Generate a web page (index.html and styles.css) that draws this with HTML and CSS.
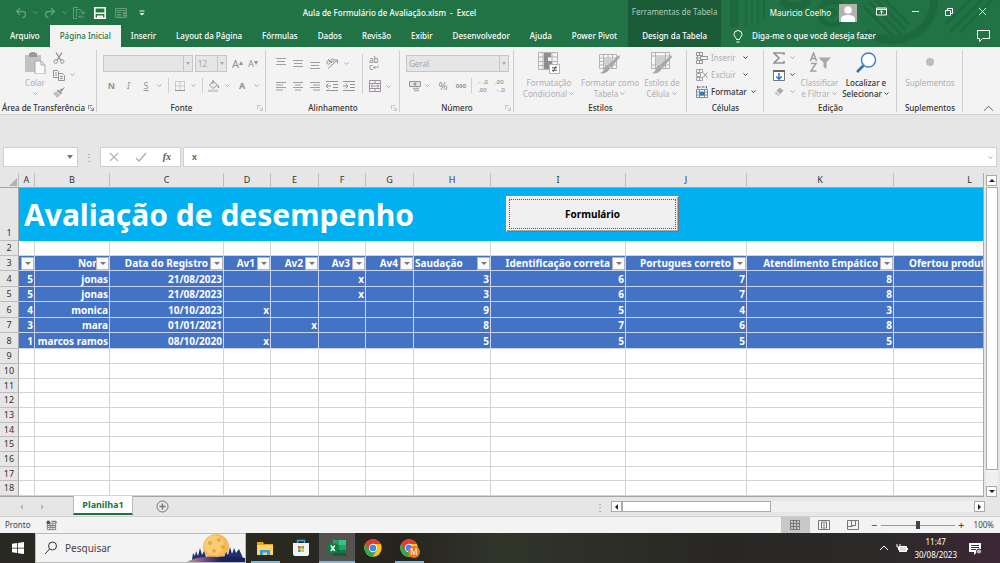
FILE: index.html
```
<!DOCTYPE html>
<html lang="pt-BR">
<head>
<meta charset="utf-8">
<title>Aula de Formulário de Avaliação.xlsm - Excel</title>
<link rel="stylesheet" href="styles.css">
</head>
<body>
<svg class="defs" aria-hidden="true">
  <symbol id="chev" viewBox="0 0 7 5"><path d="M1.500 1.500l2 2 2-2" fill="none" stroke="currentColor"/></symbol>
  <symbol id="launch" viewBox="0 0 7 7"><path d="M.5 5V.5H5M2.500 2.500L6 6M6.500 3v3.500H3" fill="none" stroke="currentColor"/></symbol>
  <symbol id="brush" viewBox="0 0 22 22"><path d="M21 5l-9 11-3-3L20 3z" fill="#a9a7a9"/><path d="M8 13c3 1 4 3 2 5-2 3-6 4-9 3 3-1 3-2 4-5 1-2 2-3 3-3z" fill="#a9a7a9"/></symbol>
</svg>

<header class="top">
  <svg class="pattern" viewBox="0 0 340 47" aria-hidden="true">
    <g fill="none" stroke="#1e683e">
      <path stroke-width="2" d="M86 0v26M92 0v24M98 0v25M104 0v20"/>
      <path stroke-width="9" d="M74 0v27"/>
      <circle cx="172" cy="13" r="12" stroke-width="6"/><circle cx="172" cy="13" r="3" stroke-width="4"/>
      <path stroke-width="8" d="M122 0a14 10 0 0 0 26 0M206 32c26 18 68 4 68-32"/>
      <path stroke-width="3" d="M203 6l30 30M209 2l32 32M216 0l30 30M225 0l24 24M290 32l32-32M300 32l32-32M286 24l24-24"/>
    </g>
  </svg>
  <div class="titlebar">
    <div class="quick">
      <button class="dim" aria-label="Desfazer"><svg viewBox="0 0 12 12"><path d="M5 1L1.500 4.500 5 8M2 4.500h5.500c4 0 4 5 0 6.500" fill="none" stroke="currentColor" stroke-width="1.300"/></svg></button>
      <svg class="chev dim"><use href="#chev"/></svg>
      <button class="dim" aria-label="Refazer"><svg viewBox="0 0 12 12"><path d="M7 1l3.500 3.500L7 8M10 4.500H4.500c-4 0-4 5 0 6.500" fill="none" stroke="currentColor" stroke-width="1.300"/></svg></button>
      <svg class="chev dim"><use href="#chev"/></svg>
      <button class="dim" aria-label="Atualizar"><svg viewBox="0 0 12 12"><path d="M4 11.500H.5V.5H5M3.500 2.500h4l2 2M3.500 2.500V10M6 6a3 3 0 0 1 5 1M11 9a3 3 0 0 1-5 0M11 4.500V7H9M6 11V9h2" fill="none" stroke="currentColor"/></svg></button>
      <button aria-label="Salvar"><svg viewBox="0 0 12 12"><path d="M.8.8h10.400v10.400H.8z" fill="none" stroke="#fff" stroke-width="1.600"/><path d="M1 5.500h10v1.500H1zM3 8.500h6V12H7V10H6v2H3z" fill="#fff"/></svg></button>
      <button class="dim" aria-label="Formulário de dados"><svg viewBox="0 0 12 12"><path d="M.5 1.500h11v9H.5zM.5 3.500h11M2 5.500h4M2 7.500h4M2 9h4M8 5.500h2.500v1H8zM8 8h2.500v1H8z" fill="none" stroke="currentColor"/></svg></button>
      <button aria-label="Personalizar"><svg viewBox="0 0 12 12"><path d="M3.500 4h5" stroke="#fff"/><path d="M3.500 6h5L6 8.500z" fill="#fff"/></svg></button>
    </div>
    <h1 class="doc">Aula de Formulário de Avaliação.xlsm&nbsp; -&nbsp; Excel</h1>
    <div class="account">
      <span>Mauricio Coelho</span>
      <svg class="avatar" viewBox="0 0 18 18"><path d="M0 0h18v18H0z" fill="#b5b1ae"/><circle cx="9" cy="6" r="3.800" fill="#fff"/><path d="M2 18v-3c0-3 3-4 7-4s7 1 7 4v3z" fill="#fff"/></svg>
    </div>
    <div class="window">
      <button aria-label="Opções da faixa"><svg viewBox="0 0 11 11"><path d="M.5 2h10v7H.5zM.5 3.500h10M5.500 8V4.800M3.800 6.500L5.500 4.800l1.700 1.700" fill="none" stroke="#fff"/></svg></button>
      <button aria-label="Minimizar"><svg viewBox="0 0 11 11"><path d="M2 5.500h7" stroke="#fff"/></svg></button>
      <button aria-label="Restaurar"><svg viewBox="0 0 11 11"><path d="M2.500 4.500h5v5h-5zM4.500 4V2.500h5v5H8" fill="none" stroke="#fff"/></svg></button>
      <button aria-label="Fechar"><svg viewBox="0 0 11 11"><path d="M2 2l7 7M9 2L2 9" stroke="#fff"/></svg></button>
    </div>
  </div>
  <nav class="tabs">
    <button>Arquivo</button><button class="on">Página Inicial</button><button>Inserir</button><button>Layout da Página</button><button>Fórmulas</button><button>Dados</button><button>Revisão</button><button>Exibir</button><button>Desenvolvedor</button><button>Ajuda</button><button>Power Pivot</button>
    <div class="context"><span>Ferramentas de Tabela</span><button>Design da Tabela</button></div>
    <button class="tell"><svg viewBox="0 0 10 13"><path d="M3.500 9.500c0-2-2.500-2.500-2.500-5a4 4 0 0 1 8 0c0 2.500-2.500 3-2.500 5zM3.500 12h3" fill="none" stroke="#fff"/></svg>Diga-me o que você deseja fazer</button>
    <button class="comment" aria-label="Comentários"><svg viewBox="0 0 13 12"><path d="M.5.5h12v8h-7l-3 3v-3h-2z" fill="none" stroke="#fff"/></svg></button>
  </nav>
</header>

<section class="ribbon">
  <div class="group clip">
    <div class="body">
      <button class="big"><svg viewBox="0 0 22 22"><path d="M1 3h16v17H1z" fill="#c4c1c4"/><path d="M5 1h2a2 2 0 0 1 4 0h2v4H5z" fill="#9a989a"/><path d="M11 9h6l4 4v9H11z" fill="#fbf9fb" stroke="#aaa7aa"/><path d="M17 9v4h4" fill="none" stroke="#aaa7aa"/></svg>Colar<svg class="chev"><use href="#chev"/></svg></button>
      <div class="stack">
        <button aria-label="Recortar"><svg viewBox="0 0 12 12"><path d="M3 .5l5 8M9 .5l-5 8" fill="none" stroke="#949294" stroke-width="1.400"/><circle cx="2.800" cy="9.500" r="1.800" fill="none" stroke="#949294"/><circle cx="9.200" cy="9.500" r="1.800" fill="none" stroke="#949294"/></svg></button>
        <button aria-label="Copiar"><svg viewBox="0 0 12 12"><path d="M.5 1.500h4l1 1v6h-5zM5.500 4.500h4l2 2v5h-6zM2 4h2M2 6h2M7 7.500h3M7 9.500h3" fill="none" stroke="#949294"/></svg><svg class="chev"><use href="#chev"/></svg></button>
        <button aria-label="Pincel"><svg viewBox="0 0 12 12"><path d="M12 1L8.500 6 6.500 4z" fill="#949294"/><path d="M5 3.500L9 7 8 8.500 3.500 4.800z" fill="#949294"/><path d="M3 5.500l4.500 3.500L4 12 0 7.500z" fill="#c0bec0"/></svg></button>
      </div>
    </div>
    <footer>Área de Transferência<svg class="launch"><use href="#launch"/></svg></footer>
  </div>

  <div class="group font">
    <div class="body rows">
      <div class="line">
        <label class="combo face"><select disabled aria-label="Fonte"><option></option></select><i></i></label>
        <label class="combo size"><select disabled aria-label="Tamanho"><option>12</option></select><i></i></label>
        <button class="glyph grow">A<sup>▴</sup></button><button class="glyph shrink">A<sup>▾</sup></button>
      </div>
      <div class="line fmt">
        <button class="glyph"><b>N</b></button><button class="glyph"><em>I</em></button><button class="glyph"><u>S</u></button><svg class="chev"><use href="#chev"/></svg><hr>
        <button aria-label="Bordas"><svg viewBox="0 0 12 12"><path d="M1.500 1.500h9v9h-9zM6 1.500v9M1.500 6h9" fill="none" stroke="#aaa5aa" stroke-dasharray="1 1"/><path d="M1 10.500h10" stroke="#949294"/></svg></button><svg class="chev"><use href="#chev"/></svg><hr>
        <button aria-label="Preenchimento"><svg viewBox="0 0 12 12"><path d="M5 1l4.500 4L5 8.500 1.500 5zM5 0v4" fill="#eee" stroke="#949294"/><path d="M10 5c2 2 1.500 3 .5 3s-1.200-1-.5-3z" fill="#949294"/><path d="M0 9.500h10V12H0z" fill="#cfcdcf"/></svg></button><svg class="chev"><use href="#chev"/></svg>
        <button class="glyph"><b>A</b></button><svg class="chev"><use href="#chev"/></svg>
      </div>
    </div>
    <footer>Fonte<svg class="launch pale"><use href="#launch"/></svg></footer>
  </div>

  <div class="group align">
    <div class="body">
      <div class="agrid">
        <button aria-label="Superior"><svg viewBox="0 0 12 12"><path d="M1 1.500h10M2 4.500h8M1 7.500h10" stroke="#a09ea0"/></svg></button>
        <button aria-label="Meio"><svg viewBox="0 0 12 12"><path d="M1 3.500h10M2 6.500h8M1 9.500h10" stroke="#a09ea0"/></svg></button>
        <button aria-label="Inferior"><svg viewBox="0 0 12 12"><path d="M1 5.500h10M2 8.500h8M1 11.500h10" stroke="#a09ea0"/></svg></button>
        <button aria-label="Orientação"><svg viewBox="0 0 12 12"><path d="M2 11.500l9-8M8 3h3.500v3.500" fill="none" stroke="#949294"/><circle cx="2.500" cy="5.500" r="1.700" fill="none" stroke="#949294"/><path d="M2 2l4 4" stroke="#949294"/><circle cx="6.500" cy="3.500" r="1.500" fill="none" stroke="#949294"/></svg></button>
        <svg class="chev"><use href="#chev"/></svg>
        <button aria-label="À esquerda"><svg viewBox="0 0 12 12"><path d="M1 2.500h10M1 5h7M1 7.500h10M1 10h7" stroke="#a09ea0"/></svg></button>
        <button aria-label="Centralizar"><svg viewBox="0 0 12 12"><path d="M1 2.500h10M3 5h6M1 7.500h10M3 10h6" stroke="#a09ea0"/></svg></button>
        <button aria-label="À direita"><svg viewBox="0 0 12 12"><path d="M1 2.500h10M4 5h7M1 7.500h10M4 10h7" stroke="#a09ea0"/></svg></button>
        <button aria-label="Diminuir recuo"><svg viewBox="0 0 12 12"><path d="M0 1.500h12M7 4.500h5M7 7.500h5M0 10.500h12M0 6h5M2.500 3.500L0 6l2.500 2.500" fill="none" stroke="#949294"/></svg></button>
        <button aria-label="Aumentar recuo"><svg viewBox="0 0 12 12"><path d="M0 1.500h12M7 4.500h5M7 7.500h5M0 10.500h12M0 6h5M2.500 3.500L5 6 2.500 8.500" fill="none" stroke="#949294"/></svg></button>
      </div>
      <hr>
      <div class="wrapcol">
        <button class="wraptext" aria-label="Quebrar texto"><span>ab</span><span>c↵</span></button>
        <button aria-label="Mesclar"><svg viewBox="0 0 12 12"><path d="M.5.500h11v11H.5zM.5 3.500h11M.5 8.500h11M6 .5v3M6 8.500v3M2 6h8M3.500 4.500L2 6l1.500 1.500M8.500 4.500L10 6 8.500 7.500" fill="none" stroke="#9a929a"/></svg><svg class="chev"><use href="#chev"/></svg></button>
      </div>
    </div>
    <footer>Alinhamento<svg class="launch pale"><use href="#launch"/></svg></footer>
  </div>

  <div class="group number">
    <div class="body rows">
      <div class="line"><label class="combo kind"><select disabled aria-label="Formato"><option>Geral</option></select><i></i></label></div>
      <div class="line num">
        <button aria-label="Moeda"><svg viewBox="0 0 12 12"><path d="M.5 1.500h11v5H.5z" fill="#e6e3e6" stroke="#949294"/><circle cx="6" cy="4" r="1.500" fill="#949294"/><path d="M4 8.500h6M5 10.500h5" stroke="#b3b0b3" stroke-width="1.500"/></svg></button><svg class="chev"><use href="#chev"/></svg>
        <button class="glyph pct">%</button><button class="glyph zeros">000</button><hr>
        <button class="dec"><span>←,0</span><span>,00</span></button><button class="dec"><span>,00</span><span>→,0</span></button>
      </div>
    </div>
    <footer>Número<svg class="launch pale"><use href="#launch"/></svg></footer>
  </div>

  <div class="group styles">
    <div class="body">
      <button class="big w1"><svg viewBox="0 0 22 22"><path d="M.5.500h19v17H.5zM.5 5h19M.5 9.500h19M.5 13.500h19M5 .5v17M14 .5v17" fill="none" stroke="#b5b1b5"/><path d="M6 1h7v4H6zM6 5h4v4H6zM6 9h8v4H6zM6 13h5v4H6z" fill="#8f8d8f"/><path d="M11.500 12.500h10v9h-10z" fill="#fff" stroke="#b5b1b5"/><path d="M14 15.800h5M14 18.300h5M18 14l-3 6" stroke="#555"/></svg>Formatação<span>Condicional<svg class="chev"><use href="#chev"/></svg></span></button>
      <button class="big w2"><svg viewBox="0 0 22 22"><path d="M.5 2.500h17v14H.5zM.5 6h17M.5 9.500h17M.5 13h17M4.500 2.500v14M9 2.500v14M13.500 2.500v14" fill="#f7f5f7" stroke="#b5b1b5"/><path d="M5 6h9v8H5z" fill="#d0cdd0"/><use href="#brush" width="22" height="22"/></svg>Formatar como<span>Tabela<svg class="chev"><use href="#chev"/></svg></span></button>
      <button class="big w3"><svg viewBox="0 0 22 22"><path d="M.5.500h18v16H.5zM.5 4h18M.5 13h18M4.500 .5v16M14.500 .5v16" fill="#f7f5f7" stroke="#b5b1b5"/><path d="M5 4.500h9v8H5z" fill="#d0cdd0"/><use href="#brush" width="22" height="22"/></svg>Estilos de<span>Célula<svg class="chev"><use href="#chev"/></svg></span></button>
    </div>
    <footer>Estilos</footer>
  </div>

  <div class="group cells">
    <div class="body stack">
      <button><svg viewBox="0 0 12 12"><path d="M.5.5h6v3h-6zM3.500.5v3M.5 8.500h6v3h-6zM3.500 8.500v3M4.500 4.500h7v3h-7z" fill="none" stroke="#949294"/><path d="M4 6H0M2 4L0 6l2 2" fill="none" stroke="#949294"/></svg>Inserir<svg class="chev dark far"><use href="#chev"/></svg></button>
      <button><svg viewBox="0 0 12 12"><path d="M.5.5h6v3h-6zM3.500.5v3M.5 8.500h6v3h-6zM3.500 8.500v3M.5 4.500h4v3h-4z" fill="none" stroke="#a5a2a5"/><path d="M7 3.500l4.500 5M11.500 3.500L7 8.500" stroke="#949294"/></svg>Excluir<svg class="chev dark far"><use href="#chev"/></svg></button>
      <button class="live"><svg viewBox="0 0 12 12"><path d="M1.500 0v2.500M10.500 0v2.500M1.500 1h9" stroke="#2e75c8" stroke-dasharray="3 1"/><path d="M.5 3.500h11v8H.5zM3.500 3.500v8M8.500 3.500v8M.5 6h11M.5 9h11" fill="#fff" stroke="#888"/><path d="M4 6h4.500v3.500H4z" fill="#2e75c8"/></svg>Formatar<svg class="chev dark"><use href="#chev"/></svg></button>
    </div>
    <footer>Células</footer>
  </div>

  <div class="group edit">
    <div class="body">
      <div class="stack">
        <button aria-label="Soma"><svg viewBox="0 0 12 12"><path d="M11 3V1H1l5 5-5 5h10V9" fill="none" stroke="#949294" stroke-width="1.600"/></svg><svg class="chev"><use href="#chev"/></svg></button>
        <button aria-label="Preencher"><svg viewBox="0 0 12 12"><path d="M.5 1.500h11v10H.5z" fill="#fff" stroke="#777"/><path d="M0 1h12v2H0z" fill="#666"/><path d="M6 4v6M3.300 7.500L6 10.200l2.700-2.700" fill="none" stroke="#2e75c8" stroke-width="1.500"/></svg><svg class="chev dark"><use href="#chev"/></svg></button>
        <button aria-label="Limpar"><svg viewBox="0 0 12 12"><path d="M6.500 1.500l4 3-3 3.500-4-3z" fill="#aaa8aa"/><path d="M3 5.500l4 3L5.500 10 1.500 8z" fill="#cbc9cb"/></svg><svg class="chev"><use href="#chev"/></svg></button>
      </div>
      <button class="big w4"><svg viewBox="0 0 22 22"><path d="M1.500 9l3-8 3 8M2.500 6.500h4M2 11.500h5L2 19h5.500" fill="none" stroke="#a09ea0" stroke-width="1.500"/><path d="M9.500 5.500h12.500l-4.500 5V17l-3-2v-4.500z" fill="#a9a7a9"/></svg>Classificar<span>e Filtrar<svg class="chev"><use href="#chev"/></svg></span></button>
      <button class="big w5 live"><svg viewBox="0 0 22 22"><path d="M8.500 13.500L2 20" stroke="#2e75b6" stroke-width="2.600"/><circle cx="13.500" cy="8" r="7" fill="#fff" stroke="#3f7fbf" stroke-width="1.400"/></svg>Localizar e<span>Selecionar<svg class="chev dark"><use href="#chev"/></svg></span></button>
    </div>
    <footer>Edição</footer>
  </div>

  <div class="group addins">
    <div class="body"><button class="big"><svg viewBox="0 0 22 22"><circle cx="11" cy="10" r="4" fill="#bdbdbd"/></svg>Suplementos</button></div>
    <footer>Suplementos</footer>
  </div>
  <button class="collapse" aria-label="Recolher"><svg viewBox="0 0 12 7"><path d="M1 6l5-5 5 5" fill="none" stroke="#555"/></svg></button>
</section>

<section class="formula">
  <label class="namebox"><input aria-label="Caixa de nome"><i></i></label>
  <span class="grip">⋮</span>
  <div class="fx">
    <button aria-label="Cancelar"><svg viewBox="0 0 12 12"><path d="M2 2l8 8M10 2l-8 8" stroke="#b5b5b5" stroke-width="1.300"/></svg></button>
    <button aria-label="Inserir"><svg viewBox="0 0 12 12"><path d="M1 7l3 3 7-8" fill="none" stroke="#b5b5b5" stroke-width="1.600"/></svg></button>
    <button class="fn">fx</button>
  </div>
  <label class="value"><input value="x" aria-label="Barra de fórmulas"><svg class="chev"><use href="#chev"/></svg></label>
</section>

<main class="sheet">
  <div class="grid">
    <table>
      <colgroup><col class="c0"><col class="ca"><col class="cb"><col class="cc"><col class="cd"><col class="ce"><col class="cd"><col class="ce"><col class="ch"><col class="ci"><col class="cj"><col class="ck"><col></colgroup>
      <thead><tr><th class="corner"><svg viewBox="0 0 10 10"><path d="M9 1v8H1z" fill="#b1b1b1"/></svg></th><th>A</th><th>B</th><th>C</th><th>D</th><th>E</th><th>F</th><th>G</th><th>H</th><th>I</th><th>J</th><th>K</th><th>L</th></tr></thead>
      <tbody class="banner"><tr><th>1</th><td colspan="12"><div class="heading">Avaliação de desempenho<button class="form">Formulário</button></div></td></tr></tbody>
      <tbody class="blank"><tr><th>2</th><td></td><td></td><td></td><td></td><td></td><td></td><td></td><td></td><td></td><td></td><td></td><td></td></tr></tbody>
      <tbody class="data">
        <tr class="names"><th>3</th><td><button class="filter" aria-label="Filtrar"></button></td><td class="tight">Nome<button class="filter" aria-label="Filtrar Nome"></button></td><td>Data do Registro<button class="filter" aria-label="Filtrar"></button></td><td>Av1<button class="filter" aria-label="Filtrar"></button></td><td>Av2<button class="filter" aria-label="Filtrar"></button></td><td>Av3<button class="filter" aria-label="Filtrar"></button></td><td>Av4<button class="filter" aria-label="Filtrar"></button></td><td class="start">Saudação<button class="filter" aria-label="Filtrar"></button></td><td>Identificação correta<button class="filter" aria-label="Filtrar"></button></td><td>Portugues correto<button class="filter" aria-label="Filtrar"></button></td><td>Atendimento Empático<button class="filter" aria-label="Filtrar"></button></td><td class="last">Ofertou produto<button class="filter" aria-label="Filtrar"></button></td></tr>
        <tr><th>4</th><td>5</td><td>jonas</td><td>21/08/2023</td><td></td><td></td><td>x</td><td></td><td>3</td><td>6</td><td>7</td><td>8</td><td></td></tr>
        <tr><th>5</th><td>5</td><td>jonas</td><td>21/08/2023</td><td></td><td></td><td>x</td><td></td><td>3</td><td>6</td><td>7</td><td>8</td><td></td></tr>
        <tr><th>6</th><td>4</td><td>monica</td><td>10/10/2023</td><td>x</td><td></td><td></td><td></td><td>9</td><td>5</td><td>4</td><td>3</td><td></td></tr>
        <tr><th>7</th><td>3</td><td>mara</td><td>01/01/2021</td><td></td><td>x</td><td></td><td></td><td>8</td><td>7</td><td>6</td><td>8</td><td></td></tr>
        <tr><th>8</th><td>1</td><td>marcos ramos</td><td>08/10/2020</td><td>x</td><td></td><td></td><td></td><td>5</td><td>5</td><td>5</td><td>5</td><td></td></tr>
      </tbody>
      <tbody class="empty">
        <tr><th>9</th><td></td><td></td><td></td><td></td><td></td><td></td><td></td><td></td><td></td><td></td><td></td><td></td></tr>
        <tr><th>10</th><td></td><td></td><td></td><td></td><td></td><td></td><td></td><td></td><td></td><td></td><td></td><td></td></tr>
        <tr><th>11</th><td></td><td></td><td></td><td></td><td></td><td></td><td></td><td></td><td></td><td></td><td></td><td></td></tr>
        <tr><th>12</th><td></td><td></td><td></td><td></td><td></td><td></td><td></td><td></td><td></td><td></td><td></td><td></td></tr>
        <tr><th>13</th><td></td><td></td><td></td><td></td><td></td><td></td><td></td><td></td><td></td><td></td><td></td><td></td></tr>
        <tr><th>14</th><td></td><td></td><td></td><td></td><td></td><td></td><td></td><td></td><td></td><td></td><td></td><td></td></tr>
        <tr><th>15</th><td></td><td></td><td></td><td></td><td></td><td></td><td></td><td></td><td></td><td></td><td></td><td></td></tr>
        <tr><th>16</th><td></td><td></td><td></td><td></td><td></td><td></td><td></td><td></td><td></td><td></td><td></td><td></td></tr>
        <tr><th>17</th><td></td><td></td><td></td><td></td><td></td><td></td><td></td><td></td><td></td><td></td><td></td><td></td></tr>
        <tr><th>18</th><td></td><td></td><td></td><td></td><td></td><td></td><td></td><td></td><td></td><td></td><td></td><td></td></tr>
      </tbody>
    </table>
  </div>
  <div class="vscroll"><button class="arrow up" aria-label="Subir"></button><div class="thumb"></div><button class="arrow down" aria-label="Descer"></button></div>
</main>

<section class="sheets">
  <span class="nav left"></span><span class="nav right"></span>
  <button class="sheettab">Planilha1</button>
  <button class="add" aria-label="Nova planilha"><svg viewBox="0 0 13 13"><circle cx="6.500" cy="6.500" r="5.500" fill="none" stroke="#777"/><path d="M3.500 6.500h6M6.500 3.500v6" stroke="#777" stroke-width="1.400"/></svg></button>
  <span class="grip">⋮</span>
  <div class="hscroll"><button class="arrow back" aria-label="Esquerda"></button><div class="thumb"></div><button class="arrow fwd" aria-label="Direita"></button></div>
</section>

<section class="status">
  <span>Pronto</span>
  <svg class="macro" viewBox="0 0 12 12"><path d="M1.500 3.500h9v7h-9zM1.500 6h9M1.500 8h9M4.500 4v6M7.500 4v6" fill="none" stroke="#777"/><circle cx="2.500" cy="2.500" r="2" fill="#555"/><path d="M6 1.500h5v2" fill="none" stroke="#555"/></svg>
  <div class="views">
    <button class="on" aria-label="Normal"><svg viewBox="0 0 12 12"><path d="M1.500 1.500h9v9h-9zM4.500 1.500v9M7.500 1.500v9M1.500 4.500h9M1.500 7.500h9" fill="none" stroke="#777"/></svg></button>
    <button aria-label="Layout"><svg viewBox="0 0 12 12"><path d="M.5 1.500h11v9H.5zM3.500 3h5v6h-5zM5 5h2M5 7h2" fill="none" stroke="#777"/></svg></button>
    <button aria-label="Quebra"><svg viewBox="0 0 12 12"><path d="M.5 1.500h11v9H.5zM4.500 1.500v6M8.500 1.500v5M.5 7.500h5M5 6.500h4" fill="none" stroke="#777"/></svg></button>
  </div>
  <button class="step">−</button><input class="zoom" type="range" aria-label="Zoom" value="50"><button class="step">+</button>
  <span class="percent">100%</span>
</section>

<footer class="taskbar">
  <button class="start" aria-label="Iniciar"><svg viewBox="0 0 12 12"><path d="M0 1.800L5.200 1v4.700H0zM6 .9L12 0v5.700H6zM0 6.400h5.200v4.700L0 10.300zM6 6.400h6V12l-6-.8z" fill="#fff"/></svg></button>
  <label class="search"><svg viewBox="0 0 14 14"><circle cx="8.500" cy="5" r="4" fill="none" stroke="#333"/><path d="M5.500 8L1 13" stroke="#333"/></svg><input placeholder="Pesquisar" aria-label="Pesquisar">
    <svg class="moon" viewBox="0 0 60 29" aria-hidden="true"><defs><linearGradient id="hill"><stop offset="0" stop-color="#e59a8e"/><stop offset=".35" stop-color="#6b4a7c"/><stop offset=".6" stop-color="#16235f"/></linearGradient></defs><circle cx="31" cy="13" r="13" fill="#f5b95a"/><circle cx="29" cy="11" r="10" fill="#f8cc72"/><g fill="#e8a548"><circle cx="25" cy="9" r="2"/><circle cx="34" cy="6" r="2"/><circle cx="38" cy="13" r="2"/><circle cx="29" cy="17" r="2"/></g><path d="M7 26l1-7 2 3 1-5 2 5 2-8 2 7 2-4 3 9zM39 24l2-6 2 3 2-8 2 7 2-6 2 5 3-4 4 9z" fill="#1d2f70"/><path d="M0 29c8-5 18-7 32-6 10-1 20 0 28 1v5z" fill="url(#hill)"/></svg>
  </label>
  <div class="apps">
    <button class="run" aria-label="Explorador"><svg viewBox="0 0 18 18"><path d="M1 3h6l1 2h9v11H1z" fill="#e6a417"/><path d="M1 6h16v10H1z" fill="#fbd567"/><path d="M4 16v-5h10v5h-3v-2.500H7V16z" fill="#3d9be0"/></svg></button>
    <button aria-label="Loja"><svg viewBox="0 0 18 18"><path d="M5.500 5V1.500h7V5" fill="none" stroke="#38a9e0" stroke-width="1.400"/><path d="M1 4h16v11c0 1-1 2-2 2H3c-1 0-2-1-2-2z" fill="#f4f4f4"/><path d="M6 7h2.700v2.700H6z" fill="#ef5130"/><path d="M9.300 7H12v2.700H9.300z" fill="#7eb800"/><path d="M6 10.300h2.700V13H6z" fill="#17a2e8"/><path d="M9.300 10.300H12V13H9.300z" fill="#fbb800"/></svg></button>
    <button class="run on" aria-label="Excel"><svg viewBox="0 0 18 18"><path d="M5 1h13v16H5z" fill="#21a366"/><path d="M11 1h7v5h-7z" fill="#33c481"/><path d="M5 6h6v5H5z" fill="#107c41"/><path d="M5 11h13v6H5z" fill="#185c37"/><path d="M11 11h7v3h-7z" fill="#107c41"/><path d="M0 4.500h9.500v9.500H0z" fill="#107c41"/><path d="M2.800 6.500l4 5.500M6.800 6.500l-4 5.500" stroke="#fff" stroke-width="1.400"/></svg></button>
    <button aria-label="Chrome"><svg viewBox="0 0 18 18"><g id="chrome"><circle cx="9" cy="9" r="8.700" fill="#fbc116"/><path d="M9 9L1.500 4.600A8.700 8.700 0 0 0 8.500 17.700L13 11z" fill="#2da94f"/><path d="M9 5h7.700A8.700 8.700 0 0 0 1.500 4.600L5 11z" fill="#e33b2e"/><circle cx="9" cy="9" r="4.200" fill="#fff"/><circle cx="9" cy="9" r="3.300" fill="#4285f4"/></g></svg></button>
    <button class="run" aria-label="Chrome Mauricio"><svg viewBox="0 0 18 18"><use href="#chrome"/></svg><span class="badge">M</span></button>
  </div>
  <div class="tray">
    <svg viewBox="0 0 12 12"><path d="M2 8l4-4 4 4" fill="none" stroke="#fff"/></svg>
    <svg viewBox="0 0 12 12"><path d="M3.500 4.500h7v5h-7z" fill="#ddd" stroke="#fff"/><path d="M11.500 6v2M1 2v3h3V2M2.500 5v3" fill="none" stroke="#fff"/></svg>
    <time>11:47<br>30/08/2023</time>
    <svg class="note" viewBox="0 0 13 13"><path d="M0 1h12v9H8l-3 3v-3H0z" fill="#fff"/><path d="M2 3.500h8M2 5.500h8M2 7.500h5" stroke="#333"/><circle cx="10" cy="9.500" r="2.500" fill="#bbb" stroke="#333"/></svg>
  </div>
</footer>
</body>
</html>
```
FILE: styles.css
```
* { box-sizing: border-box; }
body { margin: 0; min-height: 100vh; display: flex; flex-direction: column; background: #e6e6e6; color: #333; font: 8px/12px "Noto Sans", sans-serif; overflow: hidden; }
button, input, select { font: inherit; color: inherit; background: none; border: 0; padding: 0; margin: 0; border-radius: 0; }
button { display: flex; align-items: center; white-space: nowrap; }
svg { display: block; width: 12px; height: 12px; flex: none; }
hr { border: 0; width: 1px; margin: 0; background: #d0d0d0; }
.defs { position: absolute; width: 0; height: 0; }
.chev { width: 7px; height: 5px; color: #aaa; }
.chev.dark { color: #444; }

/* title bar and tabs */
.top { position: relative; background: #217346; color: #fff; }
.pattern { position: absolute; right: 0; top: 0; width: 340px; height: 47px; }
.titlebar { position: relative; display: grid; grid-template-columns: 160px 1fr 218px 130px; align-items: center; height: 25px; }
.quick { display: flex; align-items: center; padding-left: 15px; gap: 5px; }
.quick .chev { color: #fff; }
.quick button:nth-of-type(n+4) { margin-left: 4px; }
.dim { opacity: .3; }
.doc { margin: 0; font-size: 8px; font-weight: 500; text-align: center; padding-right: 33px; }
.account { display: flex; align-items: center; justify-content: flex-end; gap: 8px; padding-right: 13px; }
.avatar { width: 18px; height: 18px; }
.window { display: flex; justify-content: space-between; padding: 0 12px 2px 6px; }
.window svg { width: 11px; height: 11px; }
.tabs { position: relative; display: flex; height: 22px; font-weight: 500; }
.tabs button { padding: 0 10px; }
.tabs .on { background: #f3f3f3; color: #217346; }
.context { display: flex; flex-direction: column; justify-content: flex-end; align-items: center; width: 93px; height: 47px; margin: -25px 0 0 1px; background: #1c5b38; }
.context span { color: #a9cdb9; margin-bottom: 7px; white-space: nowrap; font-weight: 400; }
.context button { height: 22px; }
.tabs .tell { gap: 9px; padding: 0 12px; }
.tell svg { width: 10px; height: 13px; }
.tabs .comment { margin-left: auto; padding: 0 10px; }
.comment svg { width: 13px; height: 12px; }

/* ribbon */
.ribbon { position: relative; display: flex; height: 68px; padding-top: 2px; background: #f3f3f3; border-bottom: 1px solid #d2d2d2; color: #b0aeb0; }
.group { position: relative; display: flex; flex-direction: column; flex: none; }
.group::after { content: ""; position: absolute; right: 0; top: 1px; bottom: 2px; width: 1px; background: #cfcfcf; }
.group footer { margin-top: auto; height: 13px; line-height: 13px; color: #333; font-weight: 500; text-align: center; white-space: nowrap; }
.launch { position: absolute; right: 3px; bottom: 3px; width: 6px; height: 6px; color: #777; }
.launch.pale { color: #bbb; }
.body { display: flex; }
.rows { flex-direction: column; gap: 5px; padding: 6px 0 0 6px; }
.line { display: flex; align-items: center; height: 17px; }
.stack { display: flex; flex-direction: column; }
.stack button { height: 17px; gap: 4px; }
.big { flex-direction: column; align-items: center; line-height: 11px; padding-top: 3px; }
.big > svg:first-child { width: 22px; height: 22px; margin-bottom: 3px; }
.big span { display: flex; align-items: center; gap: 1px; }
.big > .chev { margin-top: 3px; }
.live { color: #333; font-weight: 500; }

.clip { width: 97px; }
.clip .body { padding-left: 17px; }
.clip .big { width: 36px; }
.clip footer { padding-right: 10px; }
.font { width: 169px; }
.combo { position: relative; display: flex; border: 1px solid #c6c6c6; background: #e6e6e6; height: 17px; }
.combo select { flex: 1; min-width: 0; appearance: none; padding-left: 2px; opacity: 1; color: #a5a5a5; }
.combo i, .namebox i { position: absolute; right: 0; top: 0; bottom: 0; width: 9px; border-left: 1px solid #c6c6c6; display: grid; place-items: center; }
.combo i::after, .namebox i::after { content: ""; border: 2px solid transparent; border-top: 3px solid #aaa; border-bottom: 0; }
.face { width: 90px; }
.size { width: 32px; margin-left: 2px; }
.kind { width: 103px; }
.glyph { justify-content: center; color: #949294; font-size: 9px; }
.glyph sup { font-size: 8px; line-height: 8px; align-self: flex-start; }
.grow { margin-left: 5px; font-size: 11px; }
.shrink { margin-left: 5px; }
.fmt { display: grid; grid-template-columns: 17px 17px 18px 9px 8px 16px 10px 8px 16px 10px 20px 8px; justify-items: center; }
.fmt hr, .num hr { height: 15px; }
.align { width: 134px; }
.align .body { padding: 8px 0 0 9px; }
.agrid { display: grid; grid-template-columns: repeat(5, 17px); grid-template-rows: 12px 12px; row-gap: 11px; align-items: center; }
.align hr { height: 40px; margin-top: -3px; margin-left: 2px; }
.wrapcol { display: flex; flex-direction: column; gap: 11px; padding-left: 6px; }
.wrapcol button { height: 12px; gap: 4px; }
.wrapcol .wraptext { flex-direction: column; align-items: flex-start; justify-content: center; gap: 0; color: #949294; line-height: 7px; font-weight: 500; }
.number { width: 114px; }
.num { display: grid; grid-template-columns: 17px 8px 24px 12px 8px 15px 19px; justify-items: center; }
.num .pct { font-size: 11px; }
.num .zeros { font-size: 6px; font-weight: 700; }
.dec { flex-direction: column; color: #949294; font-size: 6px; line-height: 8px; font-weight: 500; }
.styles { width: 173px; }
.styles .body { padding-left: 5px; }
.w1 { width: 60px; } .w2 { width: 62px; } .w3 { width: 42px; }
.cells { width: 77px; }
.cells .body { padding-left: 9px; }
.cells button { gap: 3px; }
.cells .far { margin-left: 3px; }
.edit { width: 133px; }
.edit .body { padding-left: 9px; }
.w4 { width: 45px; margin-left: 1px; } .w5 { width: 48px; }
.addins { width: 66px; }
.addins .big { width: 100%; }
.collapse { position: absolute; right: 6px; bottom: 2px; }
.collapse svg { width: 11px; height: 7px; }

/* formula bar */
.formula { display: flex; height: 58px; padding: 32px 3px 6px; }
.namebox, .fx, .value { display: flex; align-items: center; background: #fff; border: 1px solid #d0d0d0; position: relative; }
.namebox { width: 75px; }
.namebox input { width: 60px; }
.namebox i { border: 0; width: 15px; }
.namebox i::after { border-width: 3px; border-top: 4px solid #777; border-bottom: 0; }
.grip { color: #888; font-size: 10px; width: 22px; text-align: center; align-self: center; }
.fx { width: 81px; padding: 0 7px; justify-content: space-between; }
.fn { font: italic 700 10px/12px "Liberation Serif", serif; color: #555; padding-right: 2px; }
.value { flex: 1; margin-left: 2px; padding: 0 2px 0 8px; }
.value input { flex: 1; color: #444; font-size: 9px; font-weight: 500; }

/* worksheet */
.sheet { flex: 1; display: flex; min-height: 0; }
.grid { flex: 1; min-width: 0; overflow: hidden; background: #fff; border-right: 1px solid #aaa; border-bottom: 1px solid #a5a5a5; }
table { table-layout: fixed; width: 100%; min-width: 1046px; border-collapse: separate; border-spacing: 0; }
.c0 { width: 19px; } .ca { width: 16px; } .cb { width: 75px; } .cc { width: 114px; } .cd { width: 47px; } .ce { width: 48px; }
.ch { width: 77px; } .ci { width: 135px; } .cj { width: 121px; } .ck { width: 147px; }
th, td { padding: 0; height: 15px; line-height: 14px; border-right: 1px solid #d4d4d4; border-bottom: 1px solid #d4d4d4; white-space: nowrap; }
th { background: #e6e6e6; color: #333; font-weight: 400; font-size: 9px; border-right-color: #a5a5a5; border-bottom-color: #bdbdbd; vertical-align: bottom; }
thead th { border-right-color: #bdbdbd; border-bottom-color: #a5a5a5; }
.corner svg { width: 10px; height: 10px; margin-left: 8px; }
.banner th, .banner td { height: 53px; }
.banner td { background: #00b0f0; border: 0; }
.heading { position: relative; color: #fff; font-weight: 700; font-size: 30px; line-height: 50px; padding-left: 5px; }
.form { position: absolute; left: 487px; top: 6px; width: 173px; height: 36px; justify-content: center; background: #f0f0f0; border: 1px solid; border-color: #fff #777 #777 #fff; box-shadow: inset -1px -1px #aaa; color: #000; font-size: 10px; line-height: 14px; }
.form::after { content: ""; position: absolute; inset: 2px; border: 1px dotted #555; }
.data td { background: #4472c4; color: #fff; font-weight: 700; font-size: 10px; text-align: right; padding-right: 1px; border-color: #c9d6ee; position: relative; overflow: hidden; }
.data tr:nth-child(even) > * { height: 16px; }
.data .names td { padding-right: 15px; }
.data .names .tight { padding-right: 1px; }
.data .names .start { text-align: left; padding-left: 1px; }
.data .names .last { text-align: left; padding-left: 15px; }
.filter { position: absolute; right: 0; top: 1px; width: 13px; height: 13px; background: #fafafa; border: 1px solid #b5b5b5; justify-content: center; }
.filter::after { content: ""; border: 3px solid transparent; border-top: 3px solid #777; border-bottom: 0; }
.empty tr:nth-child(3n) > * { height: 14px; line-height: 13px; }
.vscroll, .hscroll { display: flex; background: #f0f0f0; }
.vscroll { flex-direction: column; width: 12px; margin: 2px 2px 0 2px; }
.thumb { background: #fff; border: 1px solid #aaa; }
.vscroll .thumb { flex: 1; margin: 1px 0 16px; }
.arrow { width: 11px; height: 11px; justify-content: center; background: #fff; border: 1px solid #aaa; flex: none; }
.arrow::after { content: ""; border: 3px solid transparent; }
.up::after { border-bottom: 3px solid #222; border-top: 0; }
.down::after { border-top: 3px solid #222; border-bottom: 0; }
.back::after { border-right: 3px solid #222; border-left: 0; }
.fwd::after { border-left: 3px solid #222; border-right: 0; }

/* sheet tabs */
.sheets { display: flex; align-items: center; height: 20px; padding-right: 15px; border-bottom: 1px solid #cfcfcf; }
.nav { border: 3px solid transparent; }
.nav.left { border-right: 3px solid #bbb; border-left: 0; margin-left: 20px; }
.nav.right { border-left: 3px solid #bbb; border-right: 0; margin: 0 29px 0 18px; }
.sheettab { align-self: flex-start; width: 60px; height: 19px; margin-top: -1px; justify-content: center; background: #fff; color: #217346; font-weight: 700; font-size: 9px; border: 1px solid #bbb; border-top: 0; border-bottom: 2px solid #217346; }
.add { margin-left: 23px; }
.add svg { width: 13px; height: 13px; }
.sheets .grip { margin-left: auto; }
.hscroll { width: 374px; }
.hscroll .thumb { width: 149px; }
.fwd { margin-left: auto; }

/* status bar */
.status { display: flex; align-items: center; height: 16px; padding: 0 6px 0 5px; background: #f3f3f3; color: #444; }
.macro { width: 11px; height: 11px; margin-left: 15px; }
.views { display: flex; align-self: stretch; margin-left: auto; }
.views button { width: 29px; height: 100%; justify-content: center; }
.views .on { background: #c8c8c8; }
.step { font-size: 11px; width: 13px; justify-content: center; }
.zoom { appearance: none; width: 74px; height: 10px; background: linear-gradient(#999, #999) center / 100% 1px no-repeat; }
.zoom::-webkit-slider-thumb { appearance: none; width: 4px; height: 8px; background: #444; }
.percent { margin-left: 6px; }

/* taskbar */
.taskbar { display: flex; height: 30px; background: linear-gradient(90deg, #2a2a22 25%, #272420 40%, #31352a 50%, #292724 72%, #2b2a29 88%, #3a2733 98%); color: #fff; }
.start { width: 35px; justify-content: center; }
.search { display: flex; align-items: center; width: 211px; background: #f3f3f3; border: 1px solid #bbb; padding-left: 8px; gap: 7px; overflow: hidden; }
.search > svg:first-child { width: 14px; height: 14px; }
.search input { flex: 1; min-width: 0; font-size: 10px; }
.search input::placeholder { color: #444; opacity: 1; }
.search .moon { width: 60px; height: 29px; }
.apps { display: flex; padding-left: 1px; }
.apps button { position: relative; width: 36px; justify-content: center; }
.apps svg { width: 18px; height: 18px; }
.run::after { content: ""; position: absolute; left: 4px; right: 3px; bottom: 0; height: 2px; background: #76b9ed; }
.apps .on { background: #54534f; }
.apps .on::after { left: 0; right: 0; }
.badge { position: absolute; left: 17px; top: 13px; width: 12px; height: 12px; border-radius: 6px; background: #ef7417; text-align: center; }
.tray { display: flex; align-items: center; gap: 6px; margin-left: auto; padding-right: 18px; }
.tray time { text-align: center; line-height: 13px; }
.tray .note { width: 13px; height: 13px; margin-left: 6px; }
```
